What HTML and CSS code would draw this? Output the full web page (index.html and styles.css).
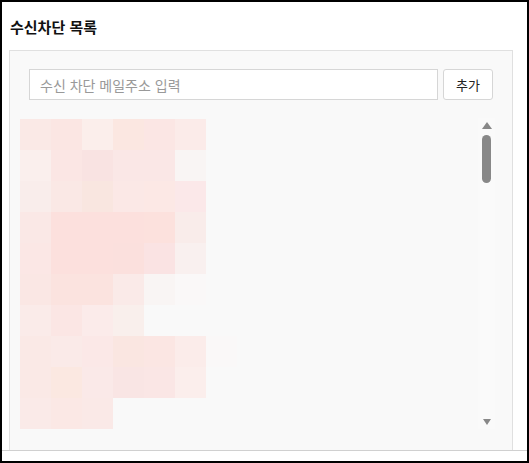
FILE: index.html
```html
<!DOCTYPE html>
<html lang="ko">
<head>
    <meta charset="UTF-8">
    <title>수신차단 목록</title>
    <link rel="stylesheet" href="styles.css">
</head>
<body>
    <div class="box">
        <h2 class="title">수신차단 목록</h2>

        <div class="panel">
            <form class="add-form">
                <input type="text" class="add-input" placeholder="수신 차단 메일주소 입력">
                <button type="button" class="add-btn">추가</button>
            </form>

            <div class="list">
                <div class="list-body">
                    <!-- blurred address image -->
                    <svg class="blur" width="217" height="310" viewBox="0 0 217 310">
                        <rect x="0" y="0" width="31" height="31" fill="#fae9e6"/>
                        <rect x="31" y="0" width="31" height="31" fill="#fbe6e3"/>
                        <rect x="62" y="0" width="31" height="31" fill="#fbeeeb"/>
                        <rect x="93" y="0" width="31" height="31" fill="#fbe7e1"/>
                        <rect x="124" y="0" width="31" height="31" fill="#fbe6e4"/>
                        <rect x="155" y="0" width="31" height="31" fill="#fbebe9"/>

                        <rect x="0" y="31" width="31" height="31" fill="#faefed"/>
                        <rect x="31" y="31" width="31" height="31" fill="#fbe6e4"/>
                        <rect x="62" y="31" width="31" height="31" fill="#f9e3e2"/>
                        <rect x="93" y="31" width="31" height="31" fill="#fae7e6"/>
                        <rect x="124" y="31" width="31" height="31" fill="#fae7e6"/>
                        <rect x="155" y="31" width="31" height="31" fill="#f9f5f4"/>

                        <rect x="0" y="62" width="31" height="31" fill="#f9edeb"/>
                        <rect x="31" y="62" width="31" height="31" fill="#fae8e5"/>
                        <rect x="62" y="62" width="31" height="31" fill="#f9e6e0"/>
                        <rect x="93" y="62" width="31" height="31" fill="#fbe8e6"/>
                        <rect x="124" y="62" width="31" height="31" fill="#fce8e5"/>
                        <rect x="155" y="62" width="31" height="31" fill="#fbe8e9"/>

                        <rect x="0" y="93" width="31" height="31" fill="#fae8e6"/>
                        <rect x="31" y="93" width="31" height="31" fill="#fce0dd"/>
                        <rect x="62" y="93" width="31" height="31" fill="#fce0dd"/>
                        <rect x="93" y="93" width="31" height="31" fill="#fce0dd"/>
                        <rect x="124" y="93" width="31" height="31" fill="#fce1dd"/>
                        <rect x="155" y="93" width="31" height="31" fill="#f9ecea"/>

                        <rect x="0" y="124" width="31" height="31" fill="#fbe7e5"/>
                        <rect x="31" y="124" width="31" height="31" fill="#fce0dd"/>
                        <rect x="62" y="124" width="31" height="31" fill="#fce0dd"/>
                        <rect x="93" y="124" width="31" height="31" fill="#fbe0dd"/>
                        <rect x="124" y="124" width="31" height="31" fill="#fae3e3"/>
                        <rect x="155" y="124" width="31" height="31" fill="#f9f0ef"/>

                        <rect x="0" y="155" width="31" height="31" fill="#fae7e4"/>
                        <rect x="31" y="155" width="31" height="31" fill="#fbe3df"/>
                        <rect x="62" y="155" width="31" height="31" fill="#fbe3df"/>
                        <rect x="93" y="155" width="31" height="31" fill="#faeae8"/>
                        <rect x="124" y="155" width="31" height="31" fill="#f9f5f4"/>
                        <rect x="155" y="155" width="31" height="31" fill="#faf8f8"/>

                        <rect x="0" y="186" width="31" height="31" fill="#faebe9"/>
                        <rect x="31" y="186" width="31" height="31" fill="#fbe6e4"/>
                        <rect x="62" y="186" width="31" height="31" fill="#fbebea"/>
                        <rect x="93" y="186" width="31" height="31" fill="#f9efec"/>

                        <rect x="0" y="217" width="31" height="31" fill="#fae9e6"/>
                        <rect x="31" y="217" width="31" height="31" fill="#faeae8"/>
                        <rect x="62" y="217" width="31" height="31" fill="#fbe8e7"/>
                        <rect x="93" y="217" width="31" height="31" fill="#fae6e1"/>
                        <rect x="124" y="217" width="31" height="31" fill="#fbe6e3"/>
                        <rect x="155" y="217" width="31" height="31" fill="#fbecea"/>
                        <rect x="186" y="217" width="31" height="31" fill="#faf8f8"/>

                        <rect x="0" y="248" width="31" height="31" fill="#fae9e6"/>
                        <rect x="31" y="248" width="31" height="31" fill="#fbe8e1"/>
                        <rect x="62" y="248" width="31" height="31" fill="#fae9e8"/>
                        <rect x="93" y="248" width="31" height="31" fill="#f9e5e4"/>
                        <rect x="124" y="248" width="31" height="31" fill="#fae6e5"/>
                        <rect x="155" y="248" width="31" height="31" fill="#fbeeec"/>

                        <rect x="0" y="279" width="31" height="31" fill="#faeae8"/>
                        <rect x="31" y="279" width="31" height="31" fill="#fbe8e5"/>
                        <rect x="62" y="279" width="31" height="31" fill="#fae9e7"/>
                    </svg>
                </div>

                <div class="scrollbar">
                    <span class="arrow-up"></span>
                    <span class="thumb"></span>
                    <span class="track"></span>
                    <span class="arrow-down"></span>
                </div>
            </div>
        </div>

        <div class="bottom-line"></div>
    </div>
</body>
</html>
```

FILE: styles.css
```css
* {
    margin: 0;
    padding: 0;
    box-sizing: border-box;
}

body {
    font-family: "Noto Sans CJK KR", "Noto Sans", sans-serif;
    color: #222;
    background: #fff;
}

.box {
    width: 529px;
    height: 463px;
    border: 2px solid #000;
    display: flex;
    flex-direction: column;
}

/* Title */
.title {
    font-size: 15px;
    font-weight: bold;
    line-height: 20px;
    padding: 15px 0 0 8px;
    margin-bottom: 13px;
    color: #111;
}

/* Panel */
.panel {
    width: 504px;
    margin-left: 7px;
    flex: 1;
    background: #f9f9f9;
    border: 1px solid #e0e0e0;
    border-bottom: none;
    display: flex;
    flex-direction: column;
}

.add-form {
    display: flex;
    gap: 5px;
    padding: 18px 19px 0 19px;
}

.add-input {
    flex: 1;
    height: 31px;
    border: 1px solid #d6d6d6;
    background: #fff;
    padding: 0 10px;
    font-family: inherit;
    font-size: 14px;
    color: #333;
    outline: none;
}

.add-input::placeholder {
    color: #999;
}

.add-btn {
    width: 50px;
    height: 31px;
    border: 1px solid #d6d6d6;
    border-radius: 3px;
    background: #fff;
    font-family: inherit;
    font-size: 13px;
    color: #222;
}

/* List with scrollbar */
.list {
    flex: 1;
    display: flex;
    padding-top: 18px;
}

.list-body {
    flex: 1;
    padding: 1px 0 0 10px;
}

.blur {
    display: block;
}

.scrollbar {
    width: 17px;
    margin-right: 17px;
    margin-bottom: 21px;
    background: #fafafa;
    display: flex;
    flex-direction: column;
    align-items: center;
    padding: 4px 0 4px 0;
}

.arrow-up {
    width: 0;
    height: 0;
    border-left: 5px solid transparent;
    border-right: 5px solid transparent;
    border-bottom: 7px solid #888;
}

.thumb {
    width: 9px;
    height: 48px;
    margin-top: 6px;
    border-radius: 5px;
    background: #888;
}

.track {
    flex: 1;
}

.arrow-down {
    width: 0;
    height: 0;
    border-left: 4px solid transparent;
    border-right: 4px solid transparent;
    border-top: 6px solid #888;
}

.bottom-line {
    height: 11px;
    border-top: 1px solid #d0d0d0;
}
```
